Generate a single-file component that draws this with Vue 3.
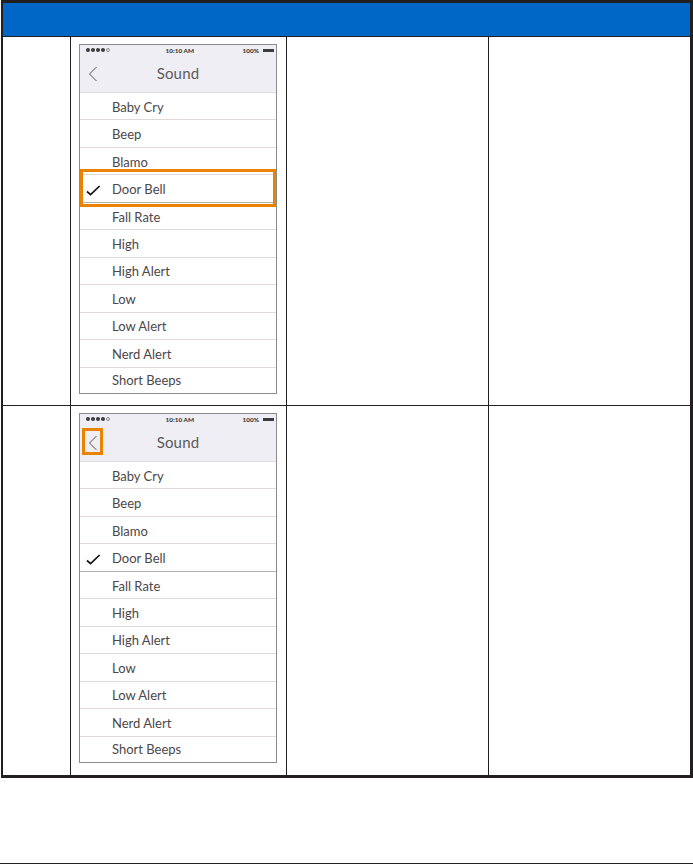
<script setup>
const sounds = ['Baby Cry', 'Beep', 'Blamo', 'Door Bell', 'Fall Rate', 'High', 'High Alert', 'Low', 'Low Alert', 'Nerd Alert', 'Short Beeps']
const rows = [
  { id: 1, highlight: 'row' },
  { id: 2, highlight: 'back' }
]
</script>

<template>
  <div class="page">
    <div class="table">
      <div class="head"></div>
      <div v-for="r in rows" :key="r.id" class="row">
        <div class="cell first"></div>
        <div class="cell shot">
          <div class="phone">
            <div class="nav">
              <div class="status">
                <span class="signal">
                  <i v-for="n in 4" :key="n" class="dot"></i><i class="dot empty"></i>
                </span>
                <span class="time">10:10 AM</span>
                <span class="batt">100% <i class="cell-bar"></i></span>
              </div>
              <div class="title">
                <svg class="back" width="10" height="16" viewBox="0 0 10 16">
                  <path d="M8.5 1 L1.5 8 L8.5 15" fill="none" stroke="#555" stroke-width="1" />
                </svg>
                <span>Sound</span>
              </div>
            </div>
            <div class="list">
              <div v-for="s in sounds" :key="s" class="item" :class="{ selected: s === 'Door Bell' }">
                <svg v-if="s === 'Door Bell'" class="check" width="15" height="11" viewBox="0 0 15 11">
                  <path d="M1 6.5 L4.6 9.6 L13.6 1" fill="none" stroke="#111" stroke-width="1.7" />
                </svg>
                <span>{{ s }}</span>
              </div>
            </div>
            <div v-if="r.highlight === 'row'" class="mark mark-row"></div>
            <div v-else class="mark mark-back"></div>
          </div>
        </div>
        <div class="cell"></div>
        <div class="cell last"></div>
      </div>
    </div>
    <div class="rule"></div>
  </div>
</template>

<style scoped>
.page {
  width: 693px;
  height: 864px;
  box-sizing: border-box;
  position: relative;
  background: #fff;
  overflow: hidden;
  font-family: Lato, "Open Sans", sans-serif;
}
.table {
  margin-left: 1px;
  width: 692px;
  height: 778px;
  box-sizing: border-box;
  border: solid #231f20;
  border-width: 3px 3px 3px 2px;
  display: flex;
  flex-direction: column;
}
.head {
  height: 34px;
  box-sizing: border-box;
  flex: none;
  background: #0067c6;
  border-bottom: 1px solid #231f20;
}
.row {
  display: grid;
  grid-template-columns: 68px 216px 202px 1fr;
}
.row:nth-child(2) {
  height: 369px;
  border-bottom: 1px solid #231f20;
  box-sizing: border-box;
}
.row:nth-child(3) {
  height: 369px;
}
.cell {
  border-right: 1px solid #231f20;
}
.cell.last {
  border-right: 0;
}
.shot {
  padding: 7px 0 0 8px;
}
.phone {
  position: relative;
  width: 198px;
  height: 350px;
  box-sizing: border-box;
  border: 1px solid #8b8b8b;
  display: flex;
  flex-direction: column;
}
.nav {
  height: 48px;
  flex: none;
  box-sizing: border-box;
  background: #eeeef4;
  border-bottom: 1px solid #e0dcdc;
  padding: 0 2px 0 6px;
}
.status {
  height: 10px;
  display: flex;
  align-items: center;
  justify-content: space-between;
  font-size: 6.4px;
  font-weight: 900;
  color: #3c3c3c;
}
.signal {
  display: flex;
  gap: 1px;
  width: 24px;
}
.dot {
  width: 4px;
  height: 4px;
  border-radius: 50%;
  background: #3c3c3c;
}
.dot.empty {
  background: transparent;
  box-sizing: border-box;
  border: 0.5px solid #888;
}
.time {
  margin-left: 7px;
}
.batt {
  display: flex;
  align-items: center;
  gap: 4px;
}
.cell-bar {
  width: 11px;
  height: 3px;
  background: #3c3c3c;
}
.title {
  position: relative;
  height: 36px;
  margin-right: 4px;
  display: flex;
  align-items: center;
  justify-content: center;
  font-size: 15px;
  color: #5c5a5c;
  letter-spacing: 0.2px;
}
.back {
  position: absolute;
  left: 2px;
  top: 11px;
}
.list {
  flex: 1;
  display: flex;
  flex-direction: column;
}
.item {
  flex: 1;
  position: relative;
  display: flex;
  align-items: center;
  padding: 1px 0 0 32px;
  font-size: 13px;
  color: #4c4748;
  border-bottom: 1px solid #ded9d6;
}
.item.selected {
  border-bottom-color: #b5b1b0;
}
.item:last-child {
  border-bottom: 0;
  padding-top: 0;
}
.check {
  position: absolute;
  left: 6px;
  top: 10px;
}
.mark {
  position: absolute;
  box-sizing: border-box;
  border: 3px solid #e98300;
}
.mark-row {
  left: 0;
  top: 124px;
  width: 196px;
  height: 38px;
}
.mark-back {
  left: 2px;
  top: 14px;
  width: 21px;
  height: 27px;
}
.rule {
  position: absolute;
  left: 0;
  right: 0;
  top: 863px;
  height: 1px;
  background: #231f20;
}
</style>
